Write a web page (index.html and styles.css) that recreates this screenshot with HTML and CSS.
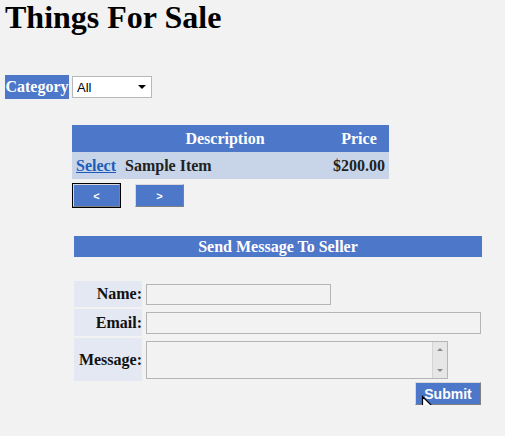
FILE: index.html
```html
<!DOCTYPE html>
<html lang="en">

<head>
    <meta charset="UTF-8">
    <title>Things For Sale</title>
    <link rel="stylesheet" href="styles.css">
</head>

<body>
    <h1>Things For Sale</h1>

    <div class="filtro">
        <span class="etiqueta">Category</span>
        <span class="combo">
            <select id="category">
                <option>All</option>
            </select>
        </span>
    </div>

    <div class="contenido">
        <table class="listado">
            <tr>
                <th class="col-sel"></th>
                <th class="col-desc">Description</th>
                <th class="col-precio">Price</th>
            </tr>
            <tr>
                <td class="col-sel"><a href="#">Select</a></td>
                <td class="col-desc">Sample Item</td>
                <td class="col-precio">$200.00</td>
            </tr>
        </table>

        <div class="paginas">
            <span class="foco"><button class="boton">&lt;</button></span>
            <button class="boton">&gt;</button>
        </div>

        <div class="mensaje">
            <div class="titulo">Send Message To Seller</div>
            <div class="formulario">
                <label class="campo" for="name">Name:</label>
                <div class="valor"><input type="text" id="name" class="corto"></div>
                <label class="campo" for="email">Email:</label>
                <div class="valor"><input type="text" id="email" class="largo"></div>
                <label class="campo" for="msg">Message:</label>
                <div class="valor">
                    <div class="area">
                        <textarea id="msg"></textarea>
                        <!-- barra de desplazamiento clásica -->
                        <div class="barra">
                            <span class="flecha arriba"></span>
                            <span class="flecha abajo"></span>
                        </div>
                    </div>
                </div>
            </div>
            <div class="enviar">
                <button class="boton submit">Submit</button>
                <svg class="cursor" width="14" height="22" viewBox="0 0 14 22">
                    <path d="M1.5 1.5 L1.5 17 L5 13.5 L7.5 20 L10 19 L7.5 12.5 L12.5 12.5 Z" fill="#fff" stroke="#000" stroke-width="1.2" stroke-linejoin="miter"/>
                </svg>
            </div>
        </div>
    </div>
</body>

</html>
```

FILE: styles.css
```css
body {
    margin: 0;
    padding: 0 5px;
    background: #f2f2f2;
    font-family: "Liberation Serif", "Times New Roman", serif;
    font-size: 16px;
    color: #000;
}

h1 {
    font-size: 32px;
    margin: 0;
    line-height: 35px;
}

.filtro {
    display: flex;
    align-items: center;
    gap: 3px;
    margin-top: 40px;
}

.etiqueta {
    background: #4d77c9;
    color: #fff;
    font-weight: bold;
    width: 64px;
    height: 24px;
    line-height: 24px;
    text-align: center;
}

.combo {
    position: relative;
    display: inline-block;
}

.combo select {
    appearance: none;
    -webkit-appearance: none;
    width: 80px;
    height: 22px;
    margin: 0;
    padding: 0 0 0 4px;
    border: 1px solid #b8b8b8;
    background: #fff;
    font-family: "Liberation Sans", Arial, sans-serif;
    font-size: 13px;
    color: #000;
    border-radius: 0;
}

.combo::after {
    content: "";
    position: absolute;
    right: 6px;
    top: 9px;
    border-left: 4px solid transparent;
    border-right: 4px solid transparent;
    border-top: 4px solid #000;
}

.contenido {
    margin-left: 67px;
    margin-top: 26px;
}

.listado {
    border-collapse: collapse;
    width: 317px;
}

.listado th {
    background: #4d77c9;
    color: #fff;
    height: 27px;
    padding: 0 4px;
    text-align: center;
}

.listado td {
    background: #c8d5e8;
    color: #222;
    font-weight: bold;
    height: 27px;
    padding: 0 4px;
}

.listado .col-sel {
    width: 41px;
}

.listado .col-precio {
    width: 50px;
}

.listado td.col-precio {
    text-align: right;
}

.listado a {
    color: #1d5cb9;
}

.paginas {
    display: flex;
    align-items: center;
    gap: 14px;
    margin-top: 4px;
}

.foco {
    display: inline-block;
    border: 1px solid #000;
}

.boton {
    background: #4d77c9;
    color: #fff;
    font-family: "Liberation Sans", Arial, sans-serif;
    font-weight: bold;
    font-size: 11px;
    width: 49px;
    height: 23px;
    margin: 0;
    padding: 0;
    border: 1px solid;
    border-color: #d8d8d8 #808080 #808080 #d8d8d8;
}

.foco .boton {
    width: 47px;
    height: 23px;
}

.mensaje {
    margin-left: 2px;
    margin-top: 28px;
    width: 408px;
}

.titulo {
    background: #4d77c9;
    color: #fff;
    font-weight: bold;
    text-align: center;
    height: 21px;
    line-height: 21px;
}

.formulario {
    display: grid;
    grid-template-columns: 68px 1fr;
    column-gap: 4px;
    row-gap: 2px;
    margin-top: 24px;
}

.campo {
    background: #e3e8f2;
    font-weight: bold;
    color: #111;
    display: flex;
    align-items: center;
    justify-content: flex-end;
}

.valor {
    display: flex;
    align-items: center;
    padding: 3px 0 2px;
}

.valor input,
.valor textarea {
    margin: 0;
    border: 1px solid #b5b5b5;
    background: #f2f2f2;
    box-sizing: border-box;
    font-family: "Liberation Sans", Arial, sans-serif;
    font-size: 13px;
}

.corto {
    width: 185px;
    height: 21px;
}

.largo {
    width: 335px;
    height: 22px;
}

.area {
    position: relative;
    display: flex;
}

.valor textarea {
    width: 302px;
    height: 38px;
    resize: none;
    overflow: hidden;
    display: block;
}

.barra {
    position: absolute;
    top: 1px;
    right: 1px;
    bottom: 1px;
    width: 15px;
    background: #e6e6e6;
    border-left: 1px solid #d4d4d4;
    display: flex;
    flex-direction: column;
    justify-content: space-between;
    align-items: center;
    padding: 6px 0;
    box-sizing: border-box;
}

.flecha {
    width: 0;
    height: 0;
    border-left: 3px solid transparent;
    border-right: 3px solid transparent;
}

.arriba {
    border-bottom: 3px solid #8a8a8a;
}

.abajo {
    border-top: 3px solid #8a8a8a;
}

.enviar {
    position: relative;
    display: flex;
    justify-content: flex-end;
    padding-right: 1px;
    margin-top: 1px;
}

.submit {
    width: 66px;
    height: 23px;
    font-size: 14px;
}

.cursor {
    position: absolute;
    left: 347px;
    top: 13px;
}
```
